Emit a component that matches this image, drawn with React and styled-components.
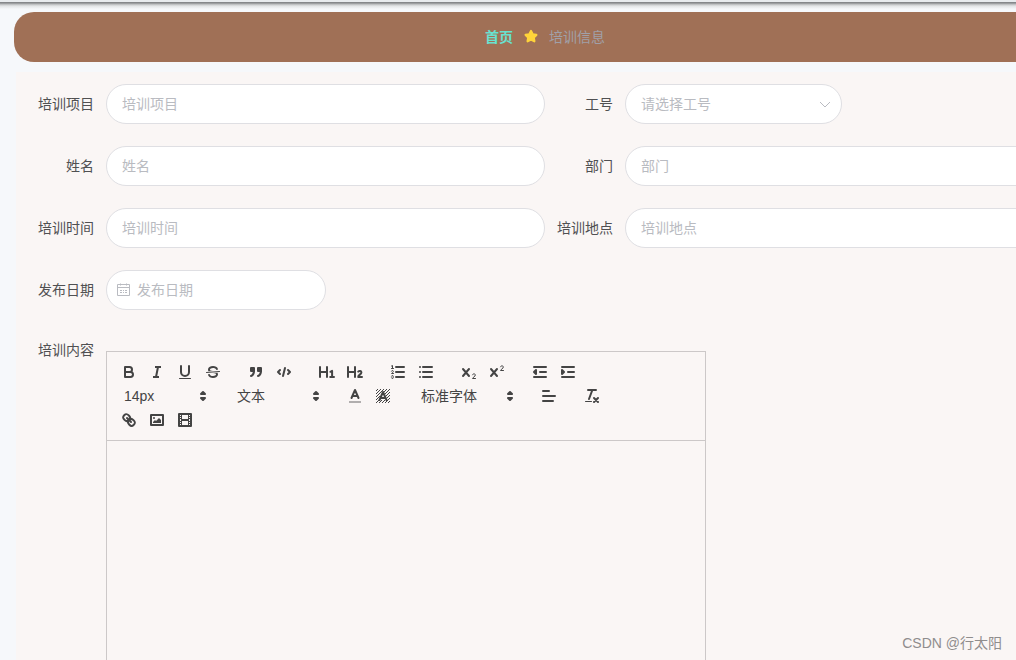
import React from "react";
import styled, { createGlobalStyle, css } from "styled-components";

const GlobalStyle = createGlobalStyle`
  *, *::before, *::after { box-sizing: border-box; }
  body {
    margin: 0;
    background: #f6f8fb;
    color: #606266;
    font-family: "Liberation Sans", "Noto Sans CJK SC", sans-serif;
    font-size: 14px;
  }
  button, input, select, textarea { font: inherit; }
`;

const Page = styled.div`
  position: relative;
  height: 100vh;
  overflow: hidden;
`;

const TopShadow = styled.div`
  height: 12px;
  background: linear-gradient(#e8ebee 0 2px, #85878a 2px 3px, #b4b6b8 4px, #e2e4e6 6px, #f6f8fb 9px);
`;

const Main = styled.main`
  width: calc(100% + 74px);
  padding: 0 14px;
`;

const Breadcrumb = styled.nav`
  display: flex;
  align-items: center;
  justify-content: center;
  gap: 10px;
  height: 50px;
  padding-bottom: 2px;
  border-radius: 20px;
  background: #a07056;
`;

const HomeLink = styled.a`
  color: #68e2d0;
  font-weight: 700;
  text-decoration: none;
`;

const CurrentPage = styled.span`
  color: #a0a0a8;
`;

const Form = styled.form`
  margin: 10px 2px 0;
  padding: 12px 10px;
  background: #faf6f5;
`;

const Fields = styled.div`
  display: grid;
  grid-template-columns: 1fr 1fr;
  row-gap: 22px;
`;

const Field = styled.div`
  display: flex;
  grid-column-end: ${(p) => (p.$wide ? "span 2" : "auto")};
`;

const Label = styled.label`
  flex: none;
  width: 80px;
  padding-right: 12px;
  color: #505052;
  line-height: ${(p) => (p.$compact ? 36 : 40)}px;
  text-align: right;
  white-space: nowrap;
`;

const pill = css`
  height: 40px;
  border: 1px solid #dfdfe3;
  border-radius: 20px;
  background: #fff;
  color: #b9bbc1;
  outline: none;
`;

const Input = styled.input`
  ${pill}
  flex: ${(p) => (p.$date ? "none" : "1")};
  min-width: 0;
  width: ${(p) => (p.$date ? "100%" : "auto")};
  padding: 0 15px 0 ${(p) => (p.$date ? 30 : 15)}px;
  &::placeholder { color: #b9bbc1; opacity: 1; }
`;

const Control = styled.div`
  position: relative;
  width: ${(p) => p.$width}px;
`;

const Select = styled.select`
  ${pill}
  width: 100%;
  padding: 0 30px 0 15px;
  appearance: none;
`;

const ControlIcon = styled.svg`
  position: absolute;
  top: 13px;
  ${(p) => p.$side}: 10px;
  width: 14px;
  height: 14px;
  fill: none;
  stroke: #b9bbc1;
  pointer-events: none;
`;

const EditorField = styled.div`
  display: flex;
  margin-top: 22px;
`;

const Editor = styled.div`
  flex: none;
  width: 600px;
  margin-top: 19px;
  border: 1px solid #ccc8c8;
`;

const Toolbar = styled.div`
  display: flex;
  flex-wrap: wrap;
  padding: 8px;
  border-bottom: 1px solid #ccc8c8;
`;

const Group = styled.div`
  display: flex;
  margin-right: 15px;
`;

const ToolButton = styled.button`
  width: 28px;
  height: 24px;
  padding: 3px 5px;
  border: 0;
  background: none;
  cursor: pointer;
`;

const Icon = styled.svg`
  display: block;
  width: 18px;
  height: 18px;
  fill: none;
  stroke: #444;
  stroke-width: 2;
  stroke-linecap: round;
  stroke-linejoin: round;
  .fill { fill: #444; stroke: none; }
  .both { fill: #444; }
  .thin { stroke-width: 1; }
  .label { opacity: 0.4; }
`;

const Picker = styled.div`
  position: relative;
  width: ${(p) => p.$width}px;
  height: 24px;
  & > svg {
    position: absolute;
    top: 3px;
    right: 1px;
    pointer-events: none;
  }
`;

const PickerSelect = styled.select`
  width: 100%;
  height: 24px;
  padding: 0 18px 0 9px;
  border: 0;
  background: none;
  color: #444;
  appearance: none;
`;

const EditorBody = styled.textarea`
  display: block;
  width: 100%;
  height: 400px;
  padding: 12px 15px;
  border: 0;
  outline: none;
  resize: none;
  background: transparent;
`;

const Watermark = styled.div`
  position: absolute;
  right: 14px;
  bottom: 6px;
  color: #8f8d8d;
  line-height: 22px;
`;

const icons = {
  bold: (
    <>
      <path d="M5,4H9.5a2.5,2.5,0,0,1,0,5H5Z" />
      <path d="M5,9h5.5a2.5,2.5,0,0,1,0,5H5Z" />
    </>
  ),
  italic: <path strokeLinecap="butt" d="M7,4H13M5,14H11M8,14L10,4" />,
  underline: (
    <>
      <path d="M5,3V9a4,4,0,0,0,8,0V3" />
      <rect className="fill" x="3" y="15" width="12" height="1" rx=".5" />
    </>
  ),
  strike: (
    <>
      <line className="thin" x1="15.5" x2="2.5" y1="8.5" y2="9.5" />
      <path className="fill" d="M9.007,8C6.542,7.791,6,7.519,6,6.5,6,5.792,7.283,5,9,5c1.571,0,2.765.679,2.969,1.309a1,1,0,0,0,1.9-.617C13.356,4.106,11.354,3,9,3,6.2,3,4,4.538,4,6.5a3.2,3.2,0,0,0,.5,1.843Z" />
      <path className="fill" d="M8.984,10C11.457,10.208,12,10.479,12,11.5c0,.708-1.283,1.5-3,1.5-1.571,0-2.765-.679-2.969-1.309a1,1,0,1,0-1.9.617C4.644,13.894,6.646,15,9,15c2.8,0,5-1.538,5-3.5a3.2,3.2,0,0,0-.5-1.843Z" />
    </>
  ),
  quote: (
    <>
      <rect className="both" x="4" y="5" width="3" height="3" />
      <rect className="both" x="11" y="5" width="3" height="3" />
      <path className="both" d="M7,8c0,4.031-3,5-3,5M14,8c0,4.031-3,5-3,5" />
    </>
  ),
  code: <path d="M5,7L3,9L5,11M13,7L15,9L13,11M10,5L8,13" />,
  h1: (
    <>
      <path d="M2,4V14M9,4V14M2,9H9" />
      <path d="M12.4,8.8L14.1,7.9V14M12.2,14H16" />
    </>
  ),
  h2: (
    <>
      <path d="M2,4V14M9,4V14M2,9H9" />
      <path d="M12.2,8.6C13.4,7.4,15.4,7.8,15.4,9.4C15.4,11.3,12.2,12,12.2,14H16" />
    </>
  ),
  ordered: (
    <>
      <path d="M7,4H15M7,9H15M7,14H15" />
      <path className="thin" d="M2.5,3L3.5,2.5V5.5M2.5,5.5H4.5" />
      <path className="thin" d="M4.5,10.5h-2c0-.234,1.85-1.076,1.85-2.234A.959.959,0,0,0,2.5,8.156" />
      <path className="thin" d="M2.5,14.846a.959.959,0,0,0,1.85-.109A.7.7,0,0,0,3.75,14a.688.688,0,0,0,.6-.736,.959.959,0,0,0-1.85-.109" />
    </>
  ),
  bullet: <path d="M6,4H15M6,9H15M6,14H15M3,4V4M3,9V9M3,14V14" />,
  sub: (
    <>
      <path d="M3,6L9,13M9,6L3,13" />
      <path className="thin" d="M12.5,11.8C13,10.3,15.3,10.5,15.3,12C15.3,13.8,12.5,14.4,12.5,15.5H15.5" />
    </>
  ),
  sup: (
    <>
      <path d="M3,6L9,13M9,6L3,13" />
      <path className="thin" d="M12.5,3.8C13,2.3,15.3,2.5,15.3,4C15.3,5.8,12.5,6.4,12.5,7.5H15.5" />
    </>
  ),
  outdent: (
    <>
      <path d="M3,14H15M3,4H15M9,9H15" />
      <path className="both" d="M5,7V11L3,9Z" />
    </>
  ),
  indent: (
    <>
      <path d="M3,14H15M3,4H15M9,9H15" />
      <path className="both" d="M3,7V11L5,9Z" />
    </>
  ),
  color: (
    <>
      <line className="label" strokeLinecap="butt" x1="3" x2="15" y1="15" y2="15" />
      <path d="M5.5,11L9,3L12.5,11M11.63,9H6.38" />
    </>
  ),
  background: (
    <>
      <path
        className="thin"
        strokeLinecap="butt"
        d="M2,4L4,2M2,7L7,2M2,10L10,2M2,13L6,9M10,5L13,2M2,16L5,13M11,7L16,2M5,16L8,13M12,9L16,5M8,16L11,13M13,11L16,8M11,16L16,11M14,16L16,14"
      />
      <path d="M5.5,13L9,5L12.5,13M11.63,11H6.38" />
    </>
  ),
  align: <path d="M3,9H15M3,14H13M3,4H9" />,
  clean: (
    <>
      <path d="M5,3H13M6,12L9.35,3M11,11L15,15M15,11L11,15" />
      <rect className="fill" x="2" y="14" width="7" height="1" rx=".5" />
    </>
  ),
  link: (
    <>
      <line x1="7" x2="11" y1="7" y2="11" />
      <path d="M8.9,4.577a3.476,3.476,0,0,1,.36,4.679A3.476,3.476,0,0,1,4.577,8.9C3.185,7.5,2.035,6.4,4.217,4.217S7.5,3.185,8.9,4.577Z" />
      <path d="M13.423,9.1a3.476,3.476,0,0,0-4.679-.36,3.476,3.476,0,0,0,.36,4.679c1.392,1.392,2.5,2.542,4.679.36S14.815,10.5,13.423,9.1Z" />
    </>
  ),
  image: (
    <>
      <rect x="3" y="4" width="12" height="10" />
      <circle className="fill" cx="6" cy="7" r="1" />
      <path className="fill" d="M5,12V11L7,9L8,10L11,7L13,9V12Z" />
    </>
  ),
  video: (
    <>
      <rect x="3" y="3" width="12" height="12" />
      <path className="fill" d="M5,3h1v12h-1ZM12,3h1v12h-1ZM5,8h8v2h-8ZM3,5h3v1h-3ZM3,7h3v1h-3ZM3,10h3v1h-3ZM3,12h3v1h-3ZM12,5h3v1h-3ZM12,7h3v1h-3ZM12,10h3v1h-3ZM12,12h3v1h-3Z" />
    </>
  ),
  picker: <path className="both" d="M7,11L9,13L11,11ZM7,7L9,5L11,7Z" />,
};

const Glyph = ({ name }) => (
  <Icon viewBox="0 0 18 18" aria-hidden="true">{icons[name]}</Icon>
);

const Tools = ({ items }) => (
  <Group>
    {items.map(([name, title]) => (
      <ToolButton key={name} type="button" aria-label={title}>
        <Glyph name={name} />
      </ToolButton>
    ))}
  </Group>
);

const ToolPicker = ({ title, value, width }) => (
  <Group>
    <Picker $width={width}>
      <PickerSelect aria-label={title}>
        <option>{value}</option>
      </PickerSelect>
      <Glyph name="picker" />
    </Picker>
  </Group>
);

const TextField = ({ id, label }) => (
  <Field>
    <Label htmlFor={id}>{label}</Label>
    <Input id={id} placeholder={label} />
  </Field>
);

export default function App() {
  return (
    <Page>
      <GlobalStyle />
      <TopShadow />
      <Main>
        <Breadcrumb>
          <HomeLink href="#">首页</HomeLink>
          <svg width="16" height="16" viewBox="0 0 16 16" aria-hidden="true">
            <path
              d="M8,3L9.7,6.3L13.4,6.9L10.8,9.6L11.4,13.3L8,11.6L4.6,13.3L5.2,9.6L2.6,6.9L6.3,6.3Z"
              fill="#ffd43a"
              stroke="#ffd43a"
              strokeWidth="2.2"
              strokeLinejoin="round"
            />
          </svg>
          <CurrentPage>培训信息</CurrentPage>
        </Breadcrumb>
        <Form>
          <Fields>
            <TextField id="project" label="培训项目" />
            <Field>
              <Label htmlFor="number">工号</Label>
              <Control $width={217}>
                <Select id="number">
                  <option>请选择工号</option>
                </Select>
                <ControlIcon $side="right" viewBox="0 0 14 14" aria-hidden="true">
                  <path d="M2,5L7,10L12,5" />
                </ControlIcon>
              </Control>
            </Field>
            <TextField id="name" label="姓名" />
            <TextField id="department" label="部门" />
            <TextField id="time" label="培训时间" />
            <TextField id="place" label="培训地点" />
            <Field $wide>
              <Label htmlFor="date">发布日期</Label>
              <Control $width={220}>
                <Input id="date" placeholder="发布日期" $date />
                <ControlIcon $side="left" viewBox="0 0 14 14" aria-hidden="true">
                  <path d="M1.5,1.5H13.5V12.5H1.5ZM1.5,4.5H13.5M4.5,0.5V2.5M10.5,0.5V2.5M4,7.5H6M7,7.5H8M9,7.5H11M4,9.5H6M7,9.5H8M9,9.5H11" />
                </ControlIcon>
              </Control>
            </Field>
          </Fields>
          <EditorField>
            <Label htmlFor="content" $compact>培训内容</Label>
            <Editor>
              <Toolbar role="toolbar">
                <Tools items={[["bold", "加粗"], ["italic", "斜体"], ["underline", "下划线"], ["strike", "删除线"]]} />
                <Tools items={[["quote", "引用"], ["code", "代码"]]} />
                <Tools items={[["h1", "标题 1"], ["h2", "标题 2"]]} />
                <Tools items={[["ordered", "有序列表"], ["bullet", "无序列表"]]} />
                <Tools items={[["sub", "下标"], ["sup", "上标"]]} />
                <Tools items={[["outdent", "减少缩进"], ["indent", "增加缩进"]]} />
                <ToolPicker title="字号" value="14px" width={98} />
                <ToolPicker title="标题" value="文本" width={98} />
                <Tools items={[["color", "文字颜色"], ["background", "背景颜色"]]} />
                <ToolPicker title="字体" value="标准字体" width={108} />
                <Tools items={[["align", "对齐"]]} />
                <Tools items={[["clean", "清除格式"]]} />
                <Tools items={[["link", "链接"], ["image", "图片"], ["video", "视频"]]} />
              </Toolbar>
              <EditorBody id="content" />
            </Editor>
          </EditorField>
        </Form>
      </Main>
      <Watermark>CSDN @行太阳</Watermark>
    </Page>
  );
}
